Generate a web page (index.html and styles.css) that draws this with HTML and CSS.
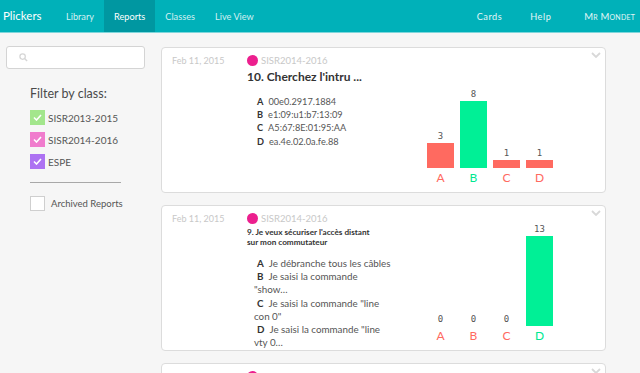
FILE: index.html
```html
<!DOCTYPE html>
<html>
<head>
<meta charset="utf-8">
<link rel="stylesheet" href="styles.css">
</head>
<body>
<nav class="nav">
  <div class="brand">Plickers</div>
  <a class="tab">Library</a>
  <a class="tab active">Reports</a>
  <a class="tab">Classes</a>
  <a class="tab">Live View</a>
  <div class="spacer"></div>
  <a class="rlink cards">Cards</a>
  <a class="rlink help">Help</a>
  <a class="rlink user">Mr Mondet</a>
</nav>
<div class="page">
  <aside class="side">
    <div class="search">
      <svg width="9" height="9" viewBox="0 0 10 10" class="sicon"><circle cx="4" cy="4" r="3" fill="none" stroke="#d6d6d6" stroke-width="1.4"/><line x1="6.2" y1="6.2" x2="9" y2="9" stroke="#d6d6d6" stroke-width="1.6"/></svg>
    </div>
    <div class="filter">
      <div class="ftitle">Filter by class:</div>
      <div class="frow"><span class="cb green"><svg width="9" height="7" viewBox="0 0 9 7"><path d="M1 3.5 L3.5 6 L8 1" fill="none" stroke="#fff" stroke-width="1.6"/></svg></span><span>SISR2013-2015</span></div>
      <div class="frow"><span class="cb pink"><svg width="9" height="7" viewBox="0 0 9 7"><path d="M1 3.5 L3.5 6 L8 1" fill="none" stroke="#fff" stroke-width="1.6"/></svg></span><span>SISR2014-2016</span></div>
      <div class="frow"><span class="cb purple"><svg width="9" height="7" viewBox="0 0 9 7"><path d="M1 3.5 L3.5 6 L8 1" fill="none" stroke="#fff" stroke-width="1.6"/></svg></span><span>ESPE</span></div>
      <div class="sep"></div>
      <div class="arow"><span class="cb empty"></span><span>Archived Reports</span></div>
    </div>
  </aside>
  <main class="main">
    <section class="card">
      <svg class="chev" width="10" height="6" viewBox="0 0 10 6"><path d="M1 1 L5 5 L9 1" fill="none" stroke="#d8d8d8" stroke-width="1.8"/></svg>
      <div class="date">Feb 11, 2015</div>
      <div class="body">
        <div class="cls"><span class="dot"></span>SISR2014-2016</div>
        <div class="qtitle big">10. Cherchez l'intru ...</div>
        <ul class="answers">
          <li><b>A</b>00e0.2917.1884</li>
          <li><b>B</b>e1:09:u1:b7:13:09</li>
          <li><b>C</b>A5:67:8E:01:95:AA</li>
          <li><b>D</b>ea.4e.02.0a.fe.88</li>
        </ul>
      </div>
      <div class="chart">
        <div class="col"><span class="num">3</span><div class="bar wrong" style="height:25px"></div><span class="lab wrong-t">A</span></div>
        <div class="col"><span class="num">8</span><div class="bar right" style="height:67px"></div><span class="lab right-t">B</span></div>
        <div class="col"><span class="num">1</span><div class="bar wrong" style="height:8px"></div><span class="lab wrong-t">C</span></div>
        <div class="col"><span class="num">1</span><div class="bar wrong" style="height:8px"></div><span class="lab wrong-t">D</span></div>
      </div>
    </section>
    <section class="card">
      <svg class="chev" width="10" height="6" viewBox="0 0 10 6"><path d="M1 1 L5 5 L9 1" fill="none" stroke="#d8d8d8" stroke-width="1.8"/></svg>
      <div class="date">Feb 11, 2015</div>
      <div class="body">
        <div class="cls"><span class="dot"></span>SISR2014-2016</div>
        <div class="qtitle small">9. Je veux sécuriser l'accès distant sur mon commutateur</div>
        <ul class="answers narrow">
          <li><b>A</b>Je débranche tous les câbles</li>
          <li><b>B</b>Je saisi la commande<br>"show…</li>
          <li><b>C</b>Je saisi la commande "line<br>con 0"</li>
          <li><b>D</b>Je saisi la commande "line<br>vty 0…</li>
        </ul>
      </div>
      <div class="chart">
        <div class="col"><span class="num">0</span><div class="bar wrong" style="height:0px"></div><span class="lab wrong-t">A</span></div>
        <div class="col"><span class="num">0</span><div class="bar wrong" style="height:0px"></div><span class="lab wrong-t">B</span></div>
        <div class="col"><span class="num">0</span><div class="bar wrong" style="height:0px"></div><span class="lab wrong-t">C</span></div>
        <div class="col"><span class="num">13</span><div class="bar right" style="height:90px"></div><span class="lab right-t">D</span></div>
      </div>
    </section>
    <section class="card">
      <svg class="chev" width="10" height="6" viewBox="0 0 10 6"><path d="M1 1 L5 5 L9 1" fill="none" stroke="#d8d8d8" stroke-width="1.8"/></svg>
      <div class="date"></div>
      <div class="body">
        <div class="cls"><span class="dot"></span>SISR2014-2016</div>
      </div>
    </section>
  </main>
</div>
</body>
</html>
```
FILE: styles.css
```css
* { box-sizing: border-box; }
html, body { margin: 0; padding: 0; }
body {
  font-family: Lato, "Open Sans", sans-serif;
  background: #f6f6f6;
  width: 640px;
  height: 373px;
  overflow: hidden;
  color: #444;
}
.nav {
  height: 33px;
  background: #00b1b9;
  border-bottom: 1px solid #7fd6db;
  display: flex;
  align-items: stretch;
  color: #fff;
}
.brand {
  font-size: 11.5px;
  padding: 0 0 0 3px;
  width: 56px;
  display: flex;
  align-items: center;
  margin-top: -1px;
}
.tab {
  font-size: 9.2px;
  padding: 0 10px;
  display: flex;
  align-items: center;
  color: #d2f0f2;
}
.tab.active {
  background: #0097a1;
  color: #fff;
}
.spacer { flex: 1; }
.rlink {
  display: flex;
  align-items: center;
  font-size: 9.2px;
  letter-spacing: 0.5px;
  color: #e3f6f7;
}
.help { margin-left: 28px; }
.user {
  margin-left: 33px;
  margin-right: 5px;
  font-variant: small-caps;
  letter-spacing: 0.2px;
  font-size: 9.5px;
}
.page {
  display: flex;
  align-items: flex-start;
}
.side {
  width: 161px;
  padding: 13px 0 0 6px;
  height: 340px;
}
.search {
  width: 139px;
  height: 23px;
  background: #fff;
  border: 1px solid #d4d4d4;
  border-radius: 3px;
  display: flex;
  align-items: center;
  padding-left: 12px;
}
.filter {
  padding-left: 24px;
}
.ftitle {
  font-size: 12.5px;
  color: #4a4a4a;
  margin-top: 17px;
  line-height: 16px;
}
.frow, .arow {
  display: flex;
  align-items: center;
  font-size: 10px;
  color: #555;
  height: 15px;
}
.frow { margin-top: 7px; }
.frow:nth-of-type(2) { margin-top: 8px; }
.cb {
  width: 15px;
  height: 15px;
  display: inline-flex;
  align-items: center;
  justify-content: center;
  margin-right: 3px;
}
.green { background: #a3e68c; }
.pink { background: #f07ccd; }
.purple { background: #ad72f2; }
.empty {
  background: #fff;
  border: 1px solid #cfcfcf;
  margin-right: 6px;
}
.sep {
  width: 91px;
  height: 1px;
  background: #a8a8a8;
  margin-top: 13px;
}
.arow { margin-top: 13px; font-size: 9.5px; }
.main {
  flex: 1;
  padding: 14px 34px 0 0;
  display: flex;
  flex-direction: column;
  gap: 12px;
}
.card {
  position: relative;
  background: #fff;
  border: 1px solid #dcdcdc;
  border-radius: 4px;
  min-height: 146px;
  display: flex;
  padding: 6px 0 0 10px;
}
.chev {
  position: absolute;
  right: 4px;
  top: 4px;
}
.date {
  width: 75px;
  font-size: 9px;
  color: #c8c8c8;
  line-height: 12px;
  padding-top: 1px;
}
.body {
  width: 160px;
}
.cls {
  display: flex;
  align-items: center;
  font-size: 9.5px;
  color: #c8c8c8;
  height: 12px;
}
.dot {
  width: 11px;
  height: 11px;
  border-radius: 50%;
  background: #ec1f8e;
  margin-right: 3px;
}
.qtitle {
  font-weight: 700;
  color: #333;
  margin-top: 3px;
}
.qtitle.big { font-size: 12px; line-height: 16px; width: 170px; }
.qtitle.small { font-size: 8.2px; line-height: 10px; width: 128px; }
.answers {
  list-style: none;
  margin: 10px 0 0 0;
  padding: 0 0 0 7px;
  font-size: 9.2px;
  line-height: 13.2px;
  color: #555;
}
.answers.narrow {
  width: 160px;
  font-size: 9.8px;
  white-space: nowrap;
}
.answers b {
  font-weight: 700;
  color: #333;
  margin: 0 5px 0 3px;
}
.chart {
  margin-left: auto;
  margin-right: 52px;
  align-self: flex-end;
  display: flex;
  gap: 6px;
  align-items: flex-end;
  padding-bottom: 6px;
}
.col {
  width: 27px;
  display: flex;
  flex-direction: column;
  align-items: center;
}
.num {
  font-family: "DejaVu Sans Mono", monospace;
  font-size: 9px;
  color: #555;
  line-height: 12px;
  margin-bottom: 1px;
}
.bar { width: 27px; }
.wrong { background: #ff6a60; }
.right { background: #00f096; }
.lab {
  font-size: 12px;
  line-height: 16px;
  margin-top: 2px;
}
.wrong-t { color: #ff6a60; }
.right-t { color: #00e890; }
```
